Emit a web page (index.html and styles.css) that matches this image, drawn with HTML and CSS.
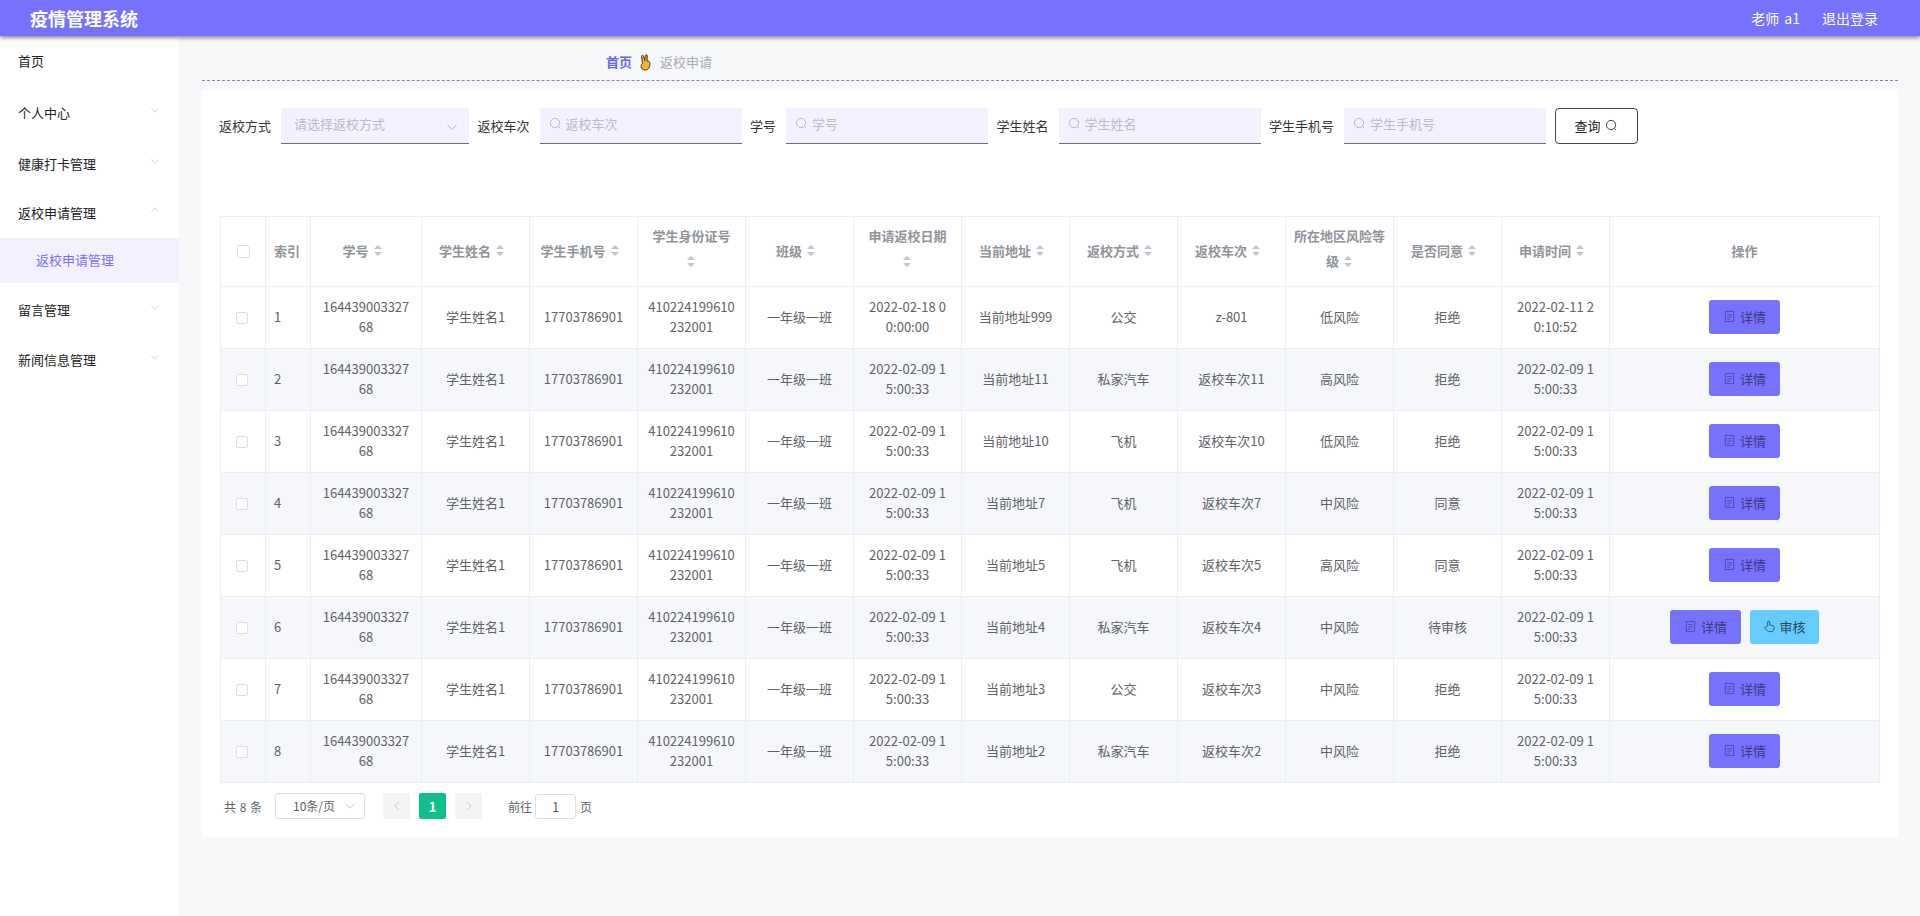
FILE: index.html
```html
<!DOCTYPE html>
<html lang="zh-CN">
<head>
<meta charset="utf-8">
<title>疫情管理系统</title>
<link rel="stylesheet" href="styles.css">
</head>
<body>
<svg class="defs" width="0" height="0" aria-hidden="true">
  <defs>
    <symbol id="i-search" viewBox="0 0 14 14"><circle cx="6.500" cy="6.500" r="5" fill="none" stroke="currentColor" stroke-width="1"/><path d="M10.200 10.200l1.800 1.800" fill="none" stroke="currentColor" stroke-width="1"/></symbol>
    <symbol id="i-chev" viewBox="0 0 12 12"><path d="M1.500 4l4.500 4.500L10.500 4" fill="none" stroke="currentColor" stroke-width="1"/></symbol>
    <symbol id="i-doc" viewBox="0 0 14 14"><path d="M2.500 1.500h9v11h-9zM4.500 5h5M4.500 7.500h5M4.500 10h3" fill="none" stroke="currentColor" stroke-width=".9"/></symbol>
    <symbol id="i-thumb" viewBox="0 0 14 14"><path d="M5 6.500V2.200a1.100 1.100 0 0 1 2.200 0V5.200l3.800 1.100c.8.300 1.200 1 1 1.800l-.8 3.400c-.2.600-.7 1-1.300 1H6.200c-.5 0-.9-.2-1.200-.6L2 8.800c-.4-.6-.2-1.200.3-1.500.5-.3 1-.2 1.400.2z" fill="none" stroke="currentColor" stroke-width=".9"/></symbol>
  </defs>
</svg>
<header class="topbar">
  <div class="brand">疫情管理系统</div>
  <div class="account"><span class="who">老师 a1</span><span>退出登录</span></div>
</header>
<div class="shell">
  <aside class="sidebar">
    <div class="menu-item first"><span>首页</span></div>
    <div class="menu-item m-a"><span>个人中心</span><svg class="chev"><use href="#i-chev"/></svg></div>
    <div class="menu-item m-b"><span>健康打卡管理</span><svg class="chev"><use href="#i-chev"/></svg></div>
    <div class="menu-item m-c"><span>返校申请管理</span><svg class="chev up"><use href="#i-chev"/></svg></div>
    <div class="submenu-item">返校申请管理</div>
    <div class="menu-item m-d"><span>留言管理</span><svg class="chev"><use href="#i-chev"/></svg></div>
    <div class="menu-item m-e"><span>新闻信息管理</span><svg class="chev"><use href="#i-chev"/></svg></div>
  </aside>
  <main class="content">
    <nav class="crumbs">
      <b>首页</b>
      <svg class="hand" viewBox="0 0 13 17"><path d="M3.500 9.500L2.600 2.600c-.2-1.500 1.700-1.700 2-.3L5.700 6.500 6.400 1.700c.2-1.400 2-1.200 1.900.2L8 7.200c1.800-.5 3 .4 3 2.300 0 3.800-1.600 6.500-4.700 6.500C3.600 16 2 14.500 2.100 12.300c0-1.400.5-2.400 1.400-2.800z" fill="#f5b531" stroke="#4a3410" stroke-width="1"/></svg>
      <span>返校申请</span>
    </nav>
    <section class="card">
      <form class="filters">
        <label>返校方式</label>
        <div class="field select-field"><span>请选择返校方式</span><svg class="chev"><use href="#i-chev"/></svg></div>
        <label>返校车次</label>
        <div class="field"><svg class="mag"><use href="#i-search"/></svg><span>返校车次</span></div>
        <label>学号</label>
        <div class="field"><svg class="mag"><use href="#i-search"/></svg><span>学号</span></div>
        <label>学生姓名</label>
        <div class="field"><svg class="mag"><use href="#i-search"/></svg><span>学生姓名</span></div>
        <label>学生手机号</label>
        <div class="field"><svg class="mag"><use href="#i-search"/></svg><span>学生手机号</span></div>
        <button type="button" class="query">查询<svg class="mag"><use href="#i-search"/></svg></button>
      </form>
      <table class="grid">
        <colgroup>
          <col class="c-s"><col class="c-s"><col class="c-l"><col class="c-m"><col class="c-m"><col class="c-m"><col class="c-m"><col class="c-m"><col class="c-m"><col class="c-m"><col class="c-m"><col class="c-m"><col class="c-m"><col class="c-m"><col>
        </colgroup>
        <thead>
          <tr>
            <th><i class="box"></i></th>
            <th class="left">索引</th>
            <th>学号<i class="sort"></i></th>
            <th>学生姓名<i class="sort"></i></th>
            <th>学生手机号<i class="sort"></i></th>
            <th class="two">学生身份证号<br><i class="sort"></i></th>
            <th>班级<i class="sort"></i></th>
            <th class="two">申请返校日期<br><i class="sort"></i></th>
            <th>当前地址<i class="sort"></i></th>
            <th>返校方式<i class="sort"></i></th>
            <th>返校车次<i class="sort"></i></th>
            <th class="two">所在地区风险等<br>级<i class="sort after"></i></th>
            <th>是否同意<i class="sort"></i></th>
            <th>申请时间<i class="sort"></i></th>
            <th>操作</th>
          </tr>
        </thead>
        <tbody>
          <tr><td><i class="box"></i></td><td class="left">1</td><td>164439003327<br>68</td><td>学生姓名1</td><td>17703786901</td><td>410224199610<br>232001</td><td>一年级一班</td><td>2022-02-18 0<br>0:00:00</td><td>当前地址999</td><td>公交</td><td>z-801</td><td>低风险</td><td>拒绝</td><td>2022-02-11 2<br>0:10:52</td><td><button type="button" class="btn detail"><svg><use href="#i-doc"/></svg>详情</button></td></tr>
          <tr><td><i class="box"></i></td><td class="left">2</td><td>164439003327<br>68</td><td>学生姓名1</td><td>17703786901</td><td>410224199610<br>232001</td><td>一年级一班</td><td>2022-02-09 1<br>5:00:33</td><td>当前地址11</td><td>私家汽车</td><td>返校车次11</td><td>高风险</td><td>拒绝</td><td>2022-02-09 1<br>5:00:33</td><td><button type="button" class="btn detail"><svg><use href="#i-doc"/></svg>详情</button></td></tr>
          <tr><td><i class="box"></i></td><td class="left">3</td><td>164439003327<br>68</td><td>学生姓名1</td><td>17703786901</td><td>410224199610<br>232001</td><td>一年级一班</td><td>2022-02-09 1<br>5:00:33</td><td>当前地址10</td><td>飞机</td><td>返校车次10</td><td>低风险</td><td>拒绝</td><td>2022-02-09 1<br>5:00:33</td><td><button type="button" class="btn detail"><svg><use href="#i-doc"/></svg>详情</button></td></tr>
          <tr><td><i class="box"></i></td><td class="left">4</td><td>164439003327<br>68</td><td>学生姓名1</td><td>17703786901</td><td>410224199610<br>232001</td><td>一年级一班</td><td>2022-02-09 1<br>5:00:33</td><td>当前地址7</td><td>飞机</td><td>返校车次7</td><td>中风险</td><td>同意</td><td>2022-02-09 1<br>5:00:33</td><td><button type="button" class="btn detail"><svg><use href="#i-doc"/></svg>详情</button></td></tr>
          <tr><td><i class="box"></i></td><td class="left">5</td><td>164439003327<br>68</td><td>学生姓名1</td><td>17703786901</td><td>410224199610<br>232001</td><td>一年级一班</td><td>2022-02-09 1<br>5:00:33</td><td>当前地址5</td><td>飞机</td><td>返校车次5</td><td>高风险</td><td>同意</td><td>2022-02-09 1<br>5:00:33</td><td><button type="button" class="btn detail"><svg><use href="#i-doc"/></svg>详情</button></td></tr>
          <tr><td><i class="box"></i></td><td class="left">6</td><td>164439003327<br>68</td><td>学生姓名1</td><td>17703786901</td><td>410224199610<br>232001</td><td>一年级一班</td><td>2022-02-09 1<br>5:00:33</td><td>当前地址4</td><td>私家汽车</td><td>返校车次4</td><td>中风险</td><td>待审核</td><td>2022-02-09 1<br>5:00:33</td><td><button type="button" class="btn detail"><svg><use href="#i-doc"/></svg>详情</button><button type="button" class="btn audit"><svg><use href="#i-thumb"/></svg>审核</button></td></tr>
          <tr><td><i class="box"></i></td><td class="left">7</td><td>164439003327<br>68</td><td>学生姓名1</td><td>17703786901</td><td>410224199610<br>232001</td><td>一年级一班</td><td>2022-02-09 1<br>5:00:33</td><td>当前地址3</td><td>公交</td><td>返校车次3</td><td>中风险</td><td>拒绝</td><td>2022-02-09 1<br>5:00:33</td><td><button type="button" class="btn detail"><svg><use href="#i-doc"/></svg>详情</button></td></tr>
          <tr><td><i class="box"></i></td><td class="left">8</td><td>164439003327<br>68</td><td>学生姓名1</td><td>17703786901</td><td>410224199610<br>232001</td><td>一年级一班</td><td>2022-02-09 1<br>5:00:33</td><td>当前地址2</td><td>私家汽车</td><td>返校车次2</td><td>中风险</td><td>拒绝</td><td>2022-02-09 1<br>5:00:33</td><td><button type="button" class="btn detail"><svg><use href="#i-doc"/></svg>详情</button></td></tr>
        </tbody>
      </table>
      <div class="pager">
        <span class="total">共 8 条</span>
        <div class="size"><span>10条/页</span><svg class="chev"><use href="#i-chev"/></svg></div>
        <div class="pg nav start"><svg class="arrow prev"><use href="#i-chev"/></svg></div>
        <div class="pg on">1</div>
        <div class="pg nav"><svg class="arrow next"><use href="#i-chev"/></svg></div>
        <span class="goto">前往</span>
        <div class="jump">1</div>
        <span>页</span>
      </div>
    </section>
  </main>
</div>
</body>
</html>
```
FILE: styles.css
```css
* { box-sizing: border-box; }
html, body { margin: 0; height: 100%; }
body {
  display: flex;
  flex-direction: column;
  height: 916px;
  overflow: hidden;
  font-family: "Noto Sans CJK SC", "Liberation Sans", sans-serif;
  font-size: 13px;
  color: #606266;
  background: #f7f8fa;
}
.defs { display: block; position: absolute; }

.topbar {
  flex: none;
  height: 36px;
  display: flex;
  align-items: center;
  justify-content: space-between;
  padding: 0 42px 0 30px;
  background: #7771ff;
  color: #fff;
  box-shadow: 0 2px 4px rgba(0, 0, 0, .45);
  position: relative;
  z-index: 2;
}
.brand { font-size: 18px; font-weight: 700; }
.account { display: flex; gap: 22px; font-size: 14px; }
.who { word-spacing: 2px; }

.shell { flex: 1; display: flex; min-height: 0; }
.sidebar {
  flex: none;
  width: 179px;
  background: #fff;
  padding-top: 2px;
}
.menu-item {
  height: 50px;
  display: flex;
  align-items: center;
  justify-content: space-between;
  padding: 0 19px 2px 18px;
  font-size: 13px;
  color: #222;
}
.menu-item .chev { width: 10px; height: 10px; margin-top: -4px; color: #c9cdd4; }
.menu-item .chev.up { transform: rotate(180deg); }
.first { height: 46px; }
.m-a { margin-top: 4px; }
.m-b { margin-top: 1px; }
.m-c { height: 49px; padding-bottom: 3px; }
.submenu-item {
  height: 45px;
  display: flex;
  align-items: center;
  padding: 0 0 2px 36px;
  background: #f3f1fe;
  color: #7771ff;
  font-size: 13px;
}
.m-d { margin-top: 2px; }
.chev { width: 12px; height: 12px; flex: none; }

.content { flex: 1; min-width: 0; padding: 0 22px 0 23px; }
.crumbs {
  height: 45px;
  display: flex;
  align-items: center;
  padding: 7px 0 0 404px;
  border-bottom: 1px dashed #8e7cc3;
  color: #a8abb2;
  font-size: 13px;
}
.crumbs b { color: #6c68dc; font-weight: 700; }
.hand { width: 13px; height: 17px; margin: 2px 8px 0 7px; }

.card {
  margin-top: 9px;
  height: 747px;
  padding: 18px 18px 0;
  background: #fff;
}
.filters {
  display: flex;
  align-items: center;
  height: 36px;
}
.filters label {
  color: #333;
  font-size: 13px;
  margin: 0 10px 0 8.5px;
  padding-bottom: 2px;
  white-space: nowrap;
}
.filters label:first-child { margin-left: -1px; }
.field {
  width: 202px;
  height: 36px;
  flex: none;
  display: flex;
  align-items: center;
  gap: 4px;
  padding: 0 0 4px 9px;
  background: #f3f1fe;
  border-bottom: 1px solid #6d6a85;
  color: #bbbcc6;
  font-size: 13px;
}
.field .mag { width: 13px; height: 13px; color: #b4b6c0; }
.select-field {
  width: 188px;
  justify-content: space-between;
  padding: 0 11px 4px 13px;
}
.select-field .chev { margin-top: 6px; color: #b4b6c0; }
.query {
  margin-left: 8.500px;
  width: 83px;
  height: 36px;
  display: flex;
  align-items: center;
  justify-content: center;
  gap: 4px;
  background: #fff;
  border: 1px solid #444;
  border-radius: 4px;
  color: #222;
  font: inherit;
  padding: 0 0 1px;
}
.query .mag { width: 13px; height: 13px; color: #333; }

.grid {
  width: 1660px;
  margin-top: 72px;
  table-layout: fixed;
  border-collapse: collapse;
  font-size: 13px;
}
.c-s { width: 45px; }
.c-l { width: 111px; }
.c-m { width: 108px; }
.grid th, .grid td {
  border: 1px solid #ebeef5;
  text-align: center;
  padding: 0 8px 2px;
  white-space: nowrap;
}
.grid .left { text-align: left; padding-left: 8px; }
.grid th {
  height: 70px;
  line-height: 24px;
  color: #909399;
  font-weight: 700;
}
.grid th.two { line-height: 25px; padding-bottom: 7px; }
.grid td { height: 62px; line-height: 20px; color: #606266; }
.grid td:first-child { padding-right: 11px; }
.grid tbody tr:nth-child(even) td { background: #f5f7fa; }
.box {
  display: inline-block;
  width: 13px;
  height: 13px;
  border: 1px solid #dcdfe6;
  border-radius: 2px;
  background: #fff;
  vertical-align: middle;
}
.grid td .box { width: 12px; height: 12px; }
.sort {
  display: inline-block;
  position: relative;
  width: 9px;
  height: 14px;
  margin: 0 7px 0 5px;
  vertical-align: -2px;
}
.two .sort { margin: 0; }
.two .sort.after { margin-left: 5px; }
.sort::before, .sort::after {
  content: "";
  position: absolute;
  left: 0;
  border: 4.500px solid transparent;
}
.sort::before { top: -2.500px; border-bottom-color: #c0c4cc; }
.sort::after { bottom: -2.500px; border-top-color: #c0c4cc; }

.btn {
  display: inline-flex;
  align-items: center;
  justify-content: center;
  gap: 4px;
  width: 71px;
  height: 34px;
  padding: 0;
  border: 1px solid transparent;
  border-radius: 3px;
  font: inherit;
  vertical-align: middle;
}
.btn svg { width: 13px; height: 13px; }
.detail { background: #7771ff; color: #3d3a80; }
.detail svg { color: #4a4699; }
.audit { background: #66ccff; margin-left: 9px; width: 69px; color: #2b4a5c; gap: 3px; }

.pager {
  display: flex;
  align-items: center;
  height: 26px;
  margin-top: 10px;
  font-size: 12px;
  color: #606266;
}
.total { margin-left: 4px; word-spacing: 1px; }
.size {
  width: 90px;
  height: 26px;
  margin-left: 13px;
  display: flex;
  align-items: center;
  justify-content: space-between;
  padding: 0 9px 1px 17px;
  border: 1px solid #dcdfe6;
  border-radius: 3px;
}
.size .chev { width: 10px; height: 10px; color: #c0c4cc; }
.pg {
  width: 27px;
  height: 26px;
  margin-left: 9px;
  display: flex;
  align-items: center;
  justify-content: center;
  border-radius: 2px;
  background: #f4f4f5;
  font-size: 13px;
  font-weight: 700;
}
.pg.start { margin-left: 18px; }
.pg.on { background: #10bf8e; color: #fff; }
.arrow { width: 10px; height: 10px; color: #b8bbc2; }
.prev { transform: rotate(90deg); }
.next { transform: rotate(-90deg); }
.goto { margin-left: 26px; }
.jump {
  width: 41px;
  height: 25px;
  margin: 0 4px 0 3px;
  display: flex;
  align-items: center;
  justify-content: center;
  border: 1px solid #dcdfe6;
  border-radius: 3px;
  font-size: 13px;
}
```
